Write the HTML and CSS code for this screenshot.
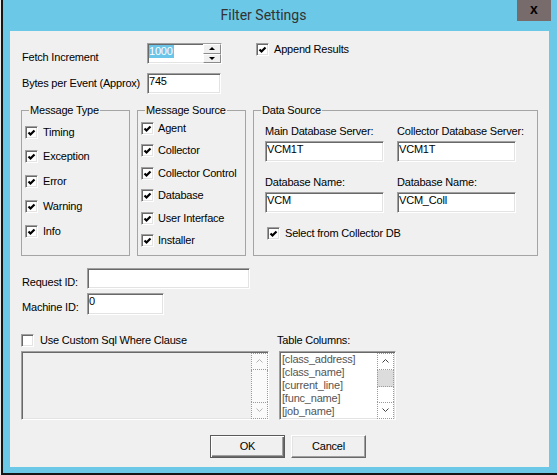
FILE: index.html
```html
<!DOCTYPE html>
<html>
<head>
<meta charset="utf-8">
<title>Filter Settings</title>
<link rel="stylesheet" href="styles.css">
</head>
<body>
<div class="window">
  <div class="titlebar">
    <div class="title">Filter Settings</div>
    <div class="close">x</div>
  </div>
  <div class="client">
    <div class="top">
      <div class="fields">
        <div class="field">
          <span class="lbl lbl-fetch">Fetch Increment</span>
          <div class="edit spin">
            <span class="sel">1000</span>
            <div class="spin-btns">
              <div class="sbtn"><i class="tri up"></i></div>
              <div class="sbtn"><i class="tri down"></i></div>
            </div>
          </div>
        </div>
        <div class="field">
          <span class="lbl">Bytes per Event (Approx)</span>
          <div class="edit bytes">745</div>
        </div>
      </div>
      <div class="chk"><span class="box"><svg width="11" height="11" viewBox="0 0 11 11"><path d="M2.5 5.5 L4.5 7.5 L8.5 3.5" fill="none" stroke="#000" stroke-width="2.2"/></svg></span>Append Results</div>
    </div>

    <div class="groups">
      <fieldset class="grp grp-type">
        <legend>Message Type</legend>
        <div class="grp-in type-in">
          <div class="chk"><span class="box"><svg width="11" height="11" viewBox="0 0 11 11"><path d="M2.5 5.5 L4.5 7.5 L8.5 3.5" fill="none" stroke="#000" stroke-width="2.2"/></svg></span>Timing</div>
          <div class="chk"><span class="box"><svg width="11" height="11" viewBox="0 0 11 11"><path d="M2.5 5.5 L4.5 7.5 L8.5 3.5" fill="none" stroke="#000" stroke-width="2.2"/></svg></span>Exception</div>
          <div class="chk"><span class="box"><svg width="11" height="11" viewBox="0 0 11 11"><path d="M2.5 5.5 L4.5 7.5 L8.5 3.5" fill="none" stroke="#000" stroke-width="2.2"/></svg></span>Error</div>
          <div class="chk"><span class="box"><svg width="11" height="11" viewBox="0 0 11 11"><path d="M2.5 5.5 L4.5 7.5 L8.5 3.5" fill="none" stroke="#000" stroke-width="2.2"/></svg></span>Warning</div>
          <div class="chk"><span class="box"><svg width="11" height="11" viewBox="0 0 11 11"><path d="M2.5 5.5 L4.5 7.5 L8.5 3.5" fill="none" stroke="#000" stroke-width="2.2"/></svg></span>Info</div>
        </div>
      </fieldset>
      <fieldset class="grp grp-src">
        <legend>Message Source</legend>
        <div class="grp-in src-in">
          <div class="chk"><span class="box"><svg width="11" height="11" viewBox="0 0 11 11"><path d="M2.5 5.5 L4.5 7.5 L8.5 3.5" fill="none" stroke="#000" stroke-width="2.2"/></svg></span>Agent</div>
          <div class="chk"><span class="box"><svg width="11" height="11" viewBox="0 0 11 11"><path d="M2.5 5.5 L4.5 7.5 L8.5 3.5" fill="none" stroke="#000" stroke-width="2.2"/></svg></span>Collector</div>
          <div class="chk"><span class="box"><svg width="11" height="11" viewBox="0 0 11 11"><path d="M2.5 5.5 L4.5 7.5 L8.5 3.5" fill="none" stroke="#000" stroke-width="2.2"/></svg></span>Collector Control</div>
          <div class="chk"><span class="box"><svg width="11" height="11" viewBox="0 0 11 11"><path d="M2.5 5.5 L4.5 7.5 L8.5 3.5" fill="none" stroke="#000" stroke-width="2.2"/></svg></span>Database</div>
          <div class="chk"><span class="box"><svg width="11" height="11" viewBox="0 0 11 11"><path d="M2.5 5.5 L4.5 7.5 L8.5 3.5" fill="none" stroke="#000" stroke-width="2.2"/></svg></span>User Interface</div>
          <div class="chk"><span class="box"><svg width="11" height="11" viewBox="0 0 11 11"><path d="M2.5 5.5 L4.5 7.5 L8.5 3.5" fill="none" stroke="#000" stroke-width="2.2"/></svg></span>Installer</div>
        </div>
      </fieldset>
      <fieldset class="grp grp-data">
        <legend>Data Source</legend>
        <div class="grp-in data-in">
          <div class="ds-grid">
            <div class="ds-col">
              <span class="lbl">Main Database Server:</span>
              <div class="edit">VCM1T</div>
              <span class="lbl lbl2">Database Name:</span>
              <div class="edit">VCM</div>
            </div>
            <div class="ds-col">
              <span class="lbl">Collector Database Server:</span>
              <div class="edit">VCM1T</div>
              <span class="lbl lbl2">Database Name:</span>
              <div class="edit">VCM_Coll</div>
            </div>
          </div>
          <div class="chk ds-chk"><span class="box"><svg width="11" height="11" viewBox="0 0 11 11"><path d="M2.5 5.5 L4.5 7.5 L8.5 3.5" fill="none" stroke="#000" stroke-width="2.2"/></svg></span>Select from Collector DB</div>
        </div>
      </fieldset>
    </div>

    <div class="idrow req">
      <span class="lbl">Request ID:</span>
      <div class="edit"></div>
    </div>
    <div class="idrow mach">
      <span class="lbl">Machine ID:</span>
      <div class="edit">0</div>
    </div>

    <div class="bottom">
      <div class="chk chk-wide"><span class="box"></span>Use Custom Sql Where Clause</div>
      <span class="lbl tc-lbl">Table Columns:</span>
      <div class="memo">
        <div class="vscroll vscroll-off">
          <div class="sb-btn"><svg width="7" height="4" viewBox="0 0 7 4"><path d="M0.5 3.5 L3.5 0.5 L6.5 3.5" fill="none" stroke="#b4b4b4"/></svg></div>
          <div class="sb-track"></div>
          <div class="sb-btn"><svg width="7" height="4" viewBox="0 0 7 4"><path d="M0.5 0.5 L3.5 3.5 L6.5 0.5" fill="none" stroke="#b4b4b4"/></svg></div>
        </div>
      </div>
      <div class="list">
        <div class="items">
          <div class="item">[class_address]</div>
          <div class="item">[class_name]</div>
          <div class="item">[current_line]</div>
          <div class="item">[func_name]</div>
          <div class="item">[job_name]</div>
        </div>
        <div class="vscroll">
          <div class="sb-btn"><svg width="7" height="4" viewBox="0 0 7 4"><path d="M0.5 3.5 L3.5 0.5 L6.5 3.5" fill="none" stroke="#404040"/></svg></div>
          <div class="sb-thumb"></div>
          <div class="sb-track"></div>
          <div class="sb-btn"><svg width="7" height="4" viewBox="0 0 7 4"><path d="M0.5 0.5 L3.5 3.5 L6.5 0.5" fill="none" stroke="#404040"/></svg></div>
        </div>
      </div>
    </div>

    <div class="btns">
      <div class="btn btn-default">OK</div>
      <div class="btn">Cancel</div>
    </div>
  </div>
</div>
</body>
</html>
```
FILE: styles.css
```css
* { box-sizing: border-box; }
html, body { margin: 0; padding: 0; }
body {
  background: #ececec;
  font-family: "Liberation Sans", Arial, sans-serif;
  font-size: 11px;
  line-height: 13px;
  letter-spacing: -0.2px;
  color: #000;
}
.window {
  margin-left: 1px;
  width: 556px;
  height: 475px;
  background: #6bc8e6;
  border-left: 2px solid #161616;
  border-bottom: 2px solid #161616;
  padding: 0 8px 6px 7px;
  display: flex;
  flex-direction: column;
}
.titlebar { height: 31px; flex: none; display: flex; align-items: flex-start; }
.title {
  flex: 1;
  text-align: center;
  font-family: Roboto, "Liberation Sans", sans-serif;
  font-size: 14px;
  line-height: 16px;
  padding-top: 7px;
  color: #333;
  letter-spacing: 0;
}
.close {
  width: 34px;
  height: 21px;
  margin-right: -2px;
  background: #776b6b;
  color: #000;
  font-weight: bold;
  font-size: 14px;
  letter-spacing: 0;
  display: flex;
  align-items: center;
  justify-content: center;
  padding-bottom: 2px;
}
.client { flex: 1; background: #f0f0f0; padding-top: 12px; }

/* generic controls */
.lbl { white-space: nowrap; }
.edit {
  background: #fff;
  border: 1px solid;
  border-color: #a0a0a0 #fff #fff #a0a0a0;
  box-shadow: inset 1px 1px #696969, inset -1px -1px #e3e3e3;
  height: 21px;
  padding: 1px 1px 0 1px;
  white-space: nowrap;
  overflow: hidden;
}
.chk { display: flex; align-items: center; gap: 5px; height: 13px; white-space: nowrap; }
.box {
  width: 13px;
  height: 13px;
  flex: none;
  background: #fff;
  border: 1px solid;
  border-color: #a0a0a0 #fff #fff #a0a0a0;
  box-shadow: inset 1px 1px #696969, inset -1px -1px #e3e3e3;
  display: flex;
}
.box svg { display: block; }

/* top section */
.top { display: flex; margin-left: 12px; }
.fields { width: 234px; flex: none; }
.field { display: flex; align-items: center; height: 21px; }
.field + .field { margin-top: 9px; }
.field .lbl { width: 125px; flex: none; }
.field .lbl-fetch { align-self: flex-start; padding-top: 8px; }
.spin { width: 75px; display: flex; padding: 0; }
.sel { align-self: flex-start; margin: 1px 0 0 1px; background: #6ac5e9; color: #fff; padding-right: 1px; }
.spin-btns { margin-left: auto; width: 18px; display: flex; flex-direction: column; }
.sbtn {
  flex: 1;
  background: #f0f0f0;
  border: 1px solid;
  border-color: #fff #8a8a8a #8a8a8a #fff;
  display: flex;
  align-items: center;
  justify-content: center;
}
.tri { width: 0; height: 0; border-left: 3px solid transparent; border-right: 3px solid transparent; }
.tri.up { border-bottom: 3px solid #000; }
.tri.down { border-top: 3px solid #000; }
.bytes { width: 74px; }

/* group boxes */
.groups { display: flex; gap: 7px; margin: 10px 0 0 11px; }
.grp { margin: 0; padding: 0; border: 1px solid #a5a5a5; height: 152px; min-width: 0; }
.grp legend { margin-left: 7px; padding: 0 1px; line-height: 13px; }
.grp-type { width: 109px; }
.grp-src { width: 109px; }
.grp-data { width: 285px; }
.grp-in { display: flex; flex-direction: column; }
.type-in { padding: 8.5px 0 0 3px; gap: 11.75px; }
.src-in { padding: 4.5px 0 0 3px; gap: 9.6px; }
.src-in .chk { gap: 4px; }
.data-in { padding: 7.6px 0 0 11px; }
.ds-grid { display: grid; grid-template-columns: 119px 119px; column-gap: 13px; }
.ds-col { display: flex; flex-direction: column; }
.ds-col .edit { margin-top: 3px; }
.ds-col .lbl2 { margin-top: 14px; }
.ds-chk { margin: 14px 0 0 2px; }

/* id rows */
.idrow { display: flex; align-items: flex-start; margin-left: 12px; }
.idrow .lbl { width: 65px; flex: none; padding-top: 8px; }
.req { margin-top: 12px; }
.req .edit { width: 163px; }
.mach { margin-top: 4px; }
.mach .edit { width: 77px; height: 22px; }

/* bottom area */
.bottom {
  display: grid;
  grid-template-columns: 248px 117px;
  column-gap: 10px;
  row-gap: 4px;
  margin: 18.7px 0 0 11px;
  align-items: center;
}
.chk-wide { gap: 6px; }
.tc-lbl { margin-left: -2px; }
.memo, .list {
  height: 69px;
  border: 1px solid;
  border-color: #a0a0a0 #fff #fff #a0a0a0;
  box-shadow: inset 1px 1px #696969, inset -1px -1px #e3e3e3;
  display: flex;
  padding: 1px 0 0 1px;
}
.memo { background: #f0f0f0; justify-content: flex-end; }
.list { background: #fff; padding-right: 1px; }
.items { flex: 1; color: #555; padding-left: 1px; overflow: hidden; }
.item { height: 13px; white-space: nowrap; }
.vscroll { width: 17px; flex: none; display: flex; flex-direction: column; background: #fff; }
.vscroll-off { width: 17px; background: #fafafa; }
.sb-btn {
  height: 17px;
  flex: none;
  border: 1px dotted #9a9a9a;
  display: flex;
  align-items: center;
  justify-content: center;
}
.sb-btn svg { display: block; }
.sb-thumb { height: 17px; flex: none; background: #dcdcdc; border: 1px dotted #9a9a9a; border-top: 0; }
.sb-track { flex: 1; border-left: 1px dotted #9a9a9a; border-right: 1px dotted #9a9a9a; }

/* buttons */
.btns { display: flex; gap: 6px; margin: 15px 0 0 200px; }
.btn {
  width: 75px;
  height: 23px;
  display: flex;
  align-items: center;
  justify-content: center;
  background: #f0f0f0;
  border: 1px solid;
  border-color: #fff #696969 #696969 #fff;
  box-shadow: inset -1px -1px #a0a0a0, inset 1px 1px #e3e3e3;
}
.btn-default {
  border-color: #5a5a5a;
  box-shadow: inset 1px 1px #fff, inset -1px -1px #696969, inset -2px -2px #a0a0a0;
}
```
